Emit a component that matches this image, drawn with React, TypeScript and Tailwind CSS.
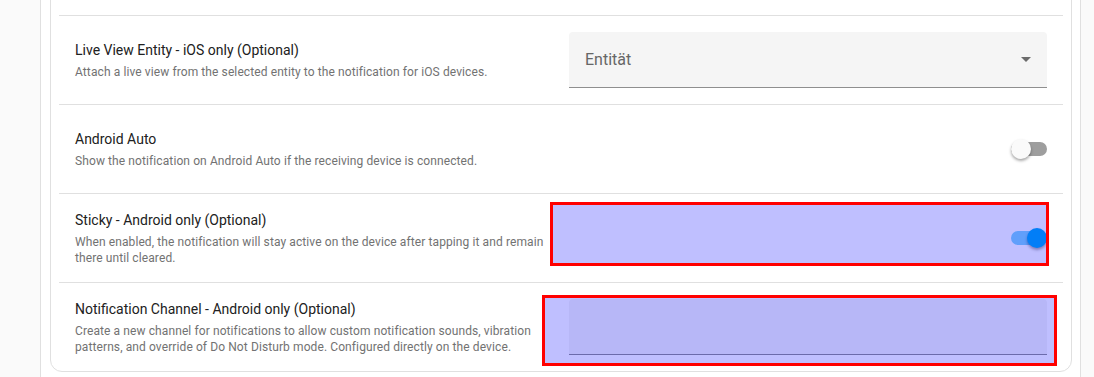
import React from "react";

type RowProps = {
  title: string;
  desc: string;
  children?: React.ReactNode;
  last?: boolean;
};

const SettingsRow = ({ title, desc, children, last }: RowProps) => {
  return (
    <div
      className={`flex items-center px-4 ${
        last ? "h-[88px]" : "h-[89px] border-b border-[#e0e0e0]"
      }`}
    >
      <div className="w-[478px] shrink-0">
        <div className="text-[14px] leading-5 text-[#212121]">{title}</div>
        <div className="mt-1 text-[12px] leading-4 tracking-[0.1px] text-[#727272]">
          {desc}
        </div>
      </div>
      <div className="ml-auto flex items-center">{children}</div>
    </div>
  );
};

const Toggle = ({ on }: { on: boolean }) => {
  return (
    <div className="relative h-5 w-9">
      <div
        className={`absolute left-0 top-[3px] h-[14px] w-9 rounded-full ${
          on ? "bg-[#81d4fa]" : "bg-[#9e9e9e]"
        }`}
      />
      <div
        className={`absolute top-0 h-5 w-5 rounded-full shadow-[0_2px_3px_rgba(0,0,0,0.35)] ${
          on ? "left-4 bg-[#03a9f4]" : "left-0 bg-[#fafafa]"
        }`}
      />
    </div>
  );
};

const App = () => {
  return (
    <div
      className="relative h-[377px] w-[1094px] overflow-hidden bg-[#fafafa]"
      style={{ fontFamily: "Roboto, 'Liberation Sans', sans-serif" }}
    >
      <div className="ml-[40px] flex h-full w-[1041px] flex-col border-x border-[#e0e0e0] bg-white pl-[9px] pr-[8px]">
        <div className="-mt-[74px] shrink-0 rounded-xl border border-[#e0e0e0] bg-white px-2">
          <div className="h-[89px] border-b border-[#e0e0e0]" />

          <SettingsRow
            title="Live View Entity - iOS only (Optional)"
            desc="Attach a live view from the selected entity to the notification for iOS devices."
          >
            <div className="flex h-14 w-[478px] items-center rounded-t border-b border-[#8f8f8f] bg-[#f5f5f5] pl-4 pr-4">
              <span className="text-[16px] text-[#666666]">Entität</span>
              <svg className="ml-auto" width="10" height="5" viewBox="0 0 10 5">
                <path d="M0 0 L10 0 L5 5 Z" fill="#6b6b6b" />
              </svg>
            </div>
          </SettingsRow>

          <SettingsRow
            title="Android Auto"
            desc="Show the notification on Android Auto if the receiving device is connected."
          >
            <Toggle on={false} />
          </SettingsRow>

          <SettingsRow
            title="Sticky - Android only (Optional)"
            desc="When enabled, the notification will stay active on the device after tapping it and remain there until cleared."
          >
            <Toggle on={true} />
          </SettingsRow>

          <SettingsRow
            last
            title="Notification Channel - Android only (Optional)"
            desc="Create a new channel for notifications to allow custom notification sounds, vibration patterns, and override of Do Not Disturb mode. Configured directly on the device."
          >
            <div className="h-14 w-[478px] rounded-t border-b border-[#8f8f8f] bg-[#f5f5f5]" />
          </SettingsRow>
        </div>
      </div>

      {/* highlight overlays */}
      <div className="absolute left-[550px] top-[202px] h-[64px] w-[499px] border-[3px] border-[#ff0000] bg-[rgba(0,0,255,0.25)]" />
      <div className="absolute left-[542px] top-[295px] h-[71px] w-[515px] border-[3px] border-[#ff0000] bg-[rgba(0,0,255,0.25)]" />
    </div>
  );
};

export default App;
